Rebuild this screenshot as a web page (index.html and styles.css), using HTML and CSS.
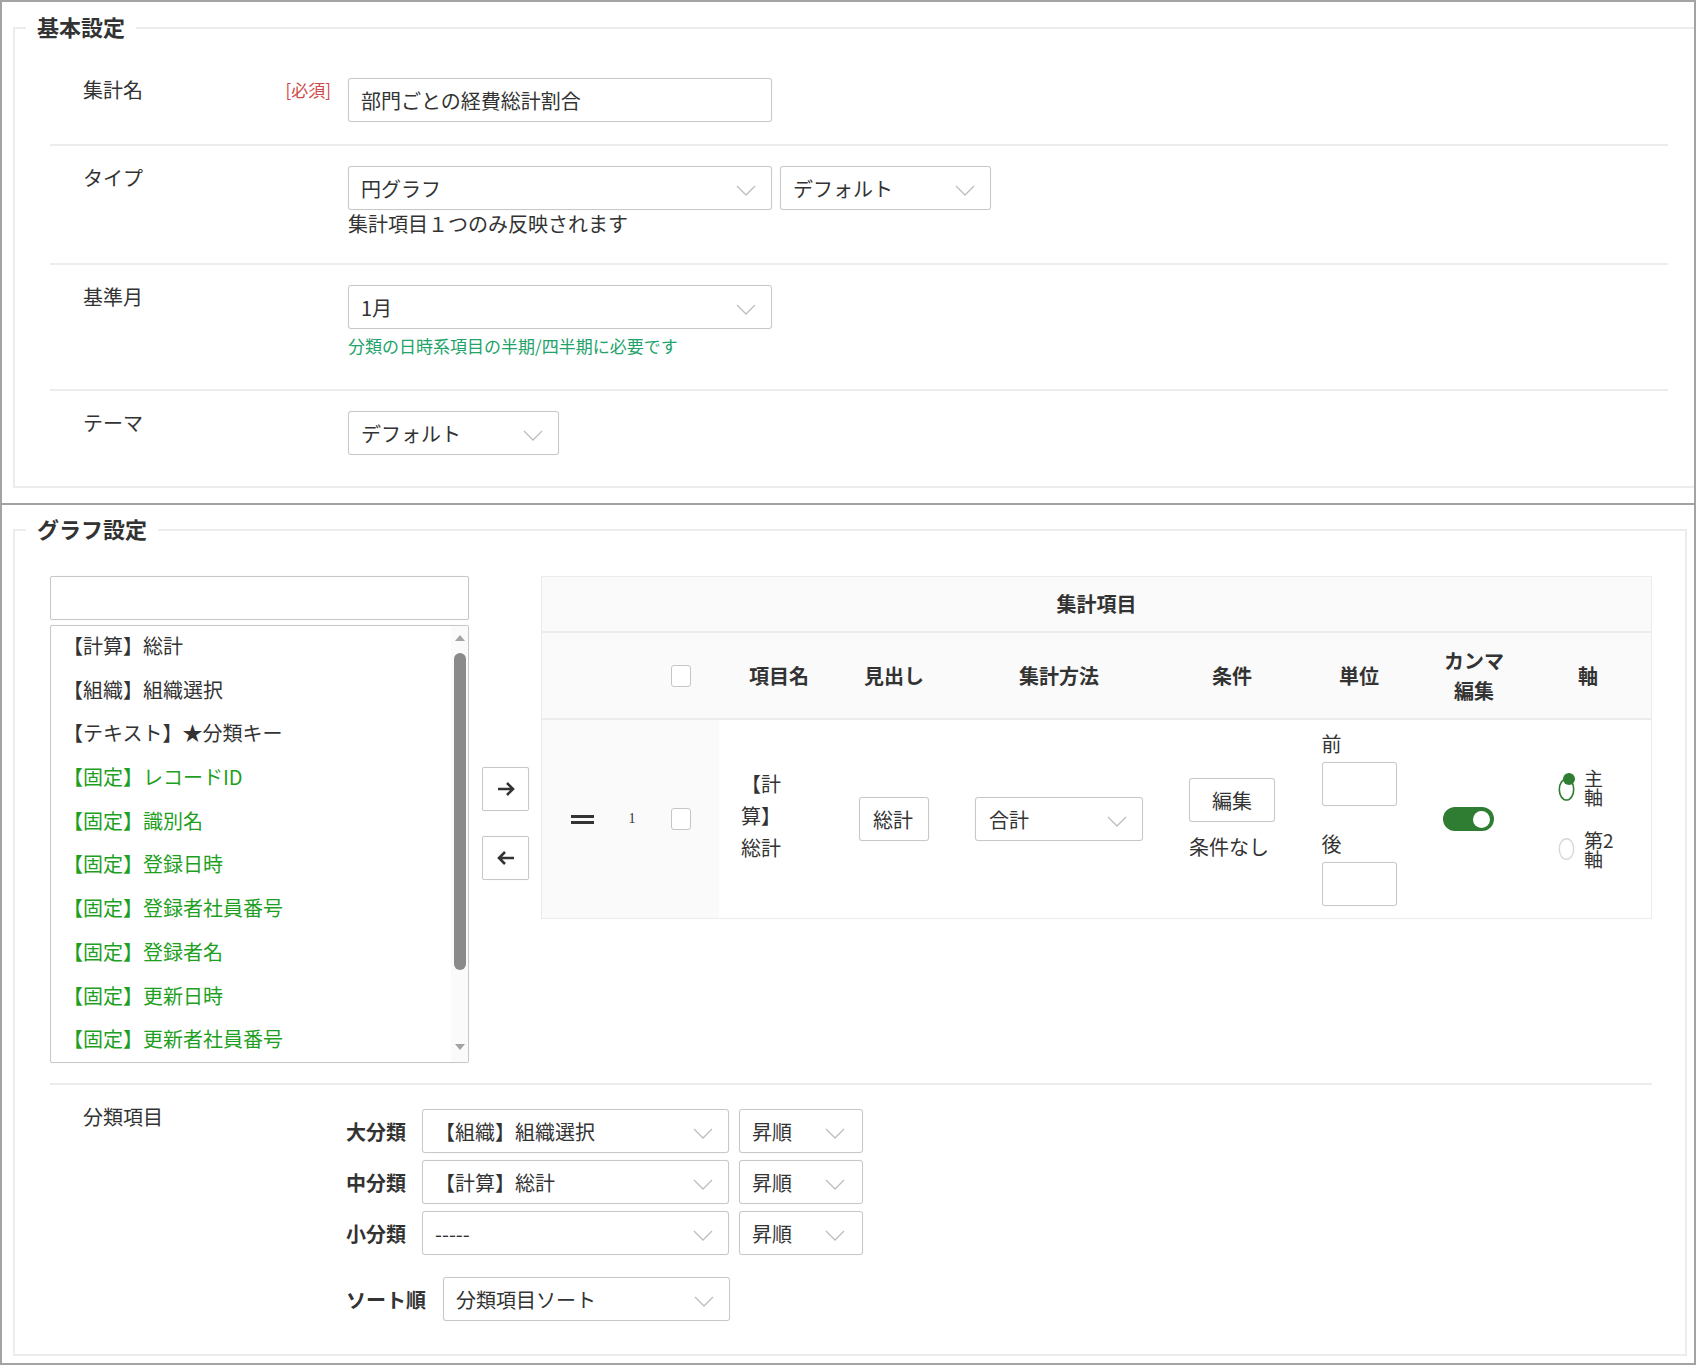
FILE: index.html
```html
<!DOCTYPE html>
<html lang="ja">
<head>
  <meta charset="UTF-8" />
  <meta name="viewport" content="width=device-width, initial-scale=1.0"/>
  <title>集計設定</title>
  <link rel="stylesheet" href="styles.css">
</head>
<body>
<div class="frame">

  <!-- 基本設定 -->
  <div class="panel panel-top">
    <fieldset class="box box-basic">
      <legend>基本設定</legend>
      <div class="box-body">
        <div class="row">
          <div class="row-label">集計名<span class="required">[必須]</span></div>
          <div class="row-field">
            <input type="text" class="field w-name" value="部門ごとの経費総計割合" />
          </div>
        </div>

        <div class="row">
          <div class="row-label">タイプ</div>
          <div class="row-field">
            <div class="field-group">
              <div class="field select w-name"><span>円グラフ</span><svg class="chev" width="20" height="11" viewBox="0 0 20 11"><polyline points="1,1 10,10 19,1"/></svg></div>
              <div class="field select w-short"><span>デフォルト</span><svg class="chev" width="20" height="11" viewBox="0 0 20 11"><polyline points="1,1 10,10 19,1"/></svg></div>
            </div>
            <p class="hint">集計項目１つのみ反映されます</p>
          </div>
        </div>

        <div class="row">
          <div class="row-label">基準月</div>
          <div class="row-field">
            <div class="field select w-name"><span>1月</span><svg class="chev" width="20" height="11" viewBox="0 0 20 11"><polyline points="1,1 10,10 19,1"/></svg></div>
            <p class="hint hint-green">分類の日時系項目の半期/四半期に必要です</p>
          </div>
        </div>

        <div class="row">
          <div class="row-label">テーマ</div>
          <div class="row-field">
            <div class="field select w-short"><span>デフォルト</span><svg class="chev" width="20" height="11" viewBox="0 0 20 11"><polyline points="1,1 10,10 19,1"/></svg></div>
          </div>
        </div>
      </div>
    </fieldset>
  </div>

  <!-- グラフ設定 -->
  <div class="panel panel-bottom">
    <fieldset class="box box-graph">
      <legend>グラフ設定</legend>
      <div class="box-body graph-body">
        <div class="graph">
          <div class="picker">
            <input type="text" class="field search" value="" />
            <div class="listbox">
              <ul class="list">
                <li>【計算】総計</li>
                <li>【組織】組織選択</li>
                <li>【テキスト】★分類キー</li>
                <li class="fixed">【固定】レコードID</li>
                <li class="fixed">【固定】識別名</li>
                <li class="fixed">【固定】登録日時</li>
                <li class="fixed">【固定】登録者社員番号</li>
                <li class="fixed">【固定】登録者名</li>
                <li class="fixed">【固定】更新日時</li>
                <li class="fixed">【固定】更新者社員番号</li>
              </ul>
              <div class="scroll">
                <span class="scroll-up"></span>
                <span class="scroll-thumb"></span>
                <span class="scroll-down"></span>
              </div>
            </div>
          </div>

          <div class="movers">
            <button class="mover" type="button">
              <svg width="20" height="16" viewBox="0 0 20 16"><path d="M2 8 H17 M11 2 L17 8 L11 14"/></svg>
            </button>
            <button class="mover" type="button">
              <svg width="20" height="16" viewBox="0 0 20 16"><path d="M18 8 H3 M9 2 L3 8 L9 14"/></svg>
            </button>
          </div>

          <div class="tbl">
            <div class="tbl-title">集計項目</div>
            <div class="tbl-grid tbl-head">
              <div></div>
              <div></div>
              <div class="cell"><span class="check"></span></div>
              <div>項目名</div>
              <div>見出し</div>
              <div>集計方法</div>
              <div>条件</div>
              <div>単位</div>
              <div>カンマ<br>編集</div>
              <div>軸</div>
            </div>
            <div class="tbl-grid tbl-body">
              <div class="cell cell-gray"><span class="handle"></span></div>
              <div class="cell cell-gray"><span class="num">1</span></div>
              <div class="cell cell-gray"><span class="check"></span></div>
              <div class="cell cell-left"><span class="item-name">【計算】総計</span></div>
              <div class="cell"><input type="text" class="field w-head" value="総計" /></div>
              <div class="cell">
                <div class="field select w-method"><span>合計</span><svg class="chev" width="20" height="11" viewBox="0 0 20 11"><polyline points="1,1 10,10 19,1"/></svg></div>
              </div>
              <div class="cell cell-left cond">
                <div>
                  <button class="field btn-edit" type="button">編集</button>
                  <p class="cond-text">条件なし</p>
                </div>
              </div>
              <div class="cell">
                <div class="unit">
                  <p>前</p>
                  <input type="text" class="field w-unit" value="" />
                  <p class="unit-after">後</p>
                  <input type="text" class="field w-unit" value="" />
                </div>
              </div>
              <div class="cell"><span class="toggle"><span class="knob"></span></span></div>
              <div class="cell cell-left axis">
                <div class="axis-list">
                  <label class="axis-opt">
                    <svg width="18" height="30" viewBox="0 0 18 30"><ellipse cx="8.5" cy="17.5" rx="7.2" ry="10.5" fill="none" stroke="#2e7d32" stroke-width="1.6"/><circle cx="11" cy="7" r="6" fill="#2e7d32"/></svg>
                    <span>主軸</span>
                  </label>
                  <label class="axis-opt">
                    <svg width="18" height="24" viewBox="0 0 18 24"><ellipse cx="8.5" cy="12" rx="7.2" ry="10.3" fill="none" stroke="#d8d8d8" stroke-width="1.4"/></svg>
                    <span>第2軸</span>
                  </label>
                </div>
              </div>
            </div>
          </div>
        </div>

        <div class="cls">
          <div class="cls-label">分類項目</div>
          <div class="cls-body">
            <div class="cls-row">
              <b>大分類</b>
              <div class="field select w-cls"><span>【組織】組織選択</span><svg class="chev" width="20" height="11" viewBox="0 0 20 11"><polyline points="1,1 10,10 19,1"/></svg></div>
              <div class="field select w-order"><span>昇順</span><svg class="chev" width="20" height="11" viewBox="0 0 20 11"><polyline points="1,1 10,10 19,1"/></svg></div>
            </div>
            <div class="cls-row">
              <b>中分類</b>
              <div class="field select w-cls"><span>【計算】総計</span><svg class="chev" width="20" height="11" viewBox="0 0 20 11"><polyline points="1,1 10,10 19,1"/></svg></div>
              <div class="field select w-order"><span>昇順</span><svg class="chev" width="20" height="11" viewBox="0 0 20 11"><polyline points="1,1 10,10 19,1"/></svg></div>
            </div>
            <div class="cls-row">
              <b>小分類</b>
              <div class="field select w-cls"><span>-----</span><svg class="chev" width="20" height="11" viewBox="0 0 20 11"><polyline points="1,1 10,10 19,1"/></svg></div>
              <div class="field select w-order"><span>昇順</span><svg class="chev" width="20" height="11" viewBox="0 0 20 11"><polyline points="1,1 10,10 19,1"/></svg></div>
            </div>
            <div class="cls-row sort-row">
              <b>ソート順</b>
              <div class="field select w-sort"><span>分類項目ソート</span><svg class="chev" width="20" height="11" viewBox="0 0 20 11"><polyline points="1,1 10,10 19,1"/></svg></div>
            </div>
          </div>
        </div>
      </div>
    </fieldset>
  </div>

</div>
</body>
</html>
```

FILE: styles.css
```css
:root {
  --text: #333;
  --frame: #a3a3a3;
  --line: #ececec;
  --input-border: #c8c8c8;
  --green: #2e7d32;
  --list-green: #1f9f1f;
  --hint-green: #22a36a;
  --gray-bg: #fafafa;
}

* {
  box-sizing: border-box;
  margin: 0;
  padding: 0;
}

body {
  font-family: "Noto Sans CJK JP", "Noto Sans", sans-serif;
  font-size: 20px;
  color: var(--text);
  background: #fff;
}

.frame {
  width: 1696px;
  height: 1365px;
  border: 2px solid var(--frame);
  overflow: hidden;
  background: #fff;
}

.panel {
  overflow: hidden;
}

.panel-top {
  height: 503px;
  border-bottom: 2px solid var(--frame);
}

.panel-bottom {
  height: 856px;
}

/* fieldsets */
.box {
  border: 2px solid var(--line);
  padding: 0 0 0 11px;
  min-width: 0;
}

.box legend {
  padding: 0 11px 4px;
  font-size: 22px;
  font-weight: bold;
  line-height: 26px;
  color: var(--text);
}

.box-basic {
  margin: 11px 0 0 11px;
  width: 1690px;
}

.box-graph {
  margin: 10px 0 0 11px;
  width: 1674px;
}

.box-body {
  padding: 15px 33px 9px 24px;
}

.graph-body {
  padding: 31px 33px 33px 24px;
}

/* form rows */
.row {
  display: flex;
  padding: 20px 0 22px;
  border-bottom: 2px solid var(--line);
}

.row:last-child {
  border-bottom: none;
}

.row-label {
  width: 298px;
  flex: none;
  padding: 0 17px 0 33px;
  line-height: 24px;
  display: flex;
  justify-content: space-between;
}

.required {
  color: #cf4a4a;
  font-size: 17px;
}

.field {
  height: 44px;
  border: 1px solid var(--input-border);
  border-radius: 3px;
  background: #fff;
  font-family: inherit;
  font-size: 20px;
  color: var(--text);
  padding: 0 12px;
  box-shadow: 0 0 1px rgba(0, 0, 0, 0.12);
}

input.field {
  outline: none;
}

.select {
  display: flex;
  align-items: center;
  justify-content: space-between;
  padding: 0 15px 0 12px;
  white-space: nowrap;
}

.chev {
  flex: none;
  margin-top: 5px;
}

.chev polyline {
  fill: none;
  stroke: #bdbdbd;
  stroke-width: 1.3;
}

.field-group {
  display: flex;
  gap: 8px;
}

.w-name { width: 424px; }
.w-short { width: 211px; }
.w-head { width: 70px; padding: 0 13px; }
.w-method { width: 168px; padding-left: 13px; }
.w-unit { width: 75px; }
.w-cls { width: 307px; }
.w-order { width: 124px; padding-right: 17px; }
.w-sort { width: 287px; }

.hint {
  line-height: 22px;
  margin: 3px 0 6px;
}

.hint-green {
  font-size: 17px;
  line-height: 20px;
  color: var(--hint-green);
  margin: 7px 0 11px;
}

/* graph area */
.graph {
  display: flex;
  align-items: flex-start;
}

.picker {
  width: 419px;
  flex: none;
}

.search {
  display: block;
  width: 100%;
  height: 44px;
  border-radius: 2px;
}

.listbox {
  margin-top: 5px;
  height: 438px;
  border: 1px solid var(--input-border);
  border-radius: 2px;
  display: flex;
  box-shadow: 0 0 1px rgba(0, 0, 0, 0.12);
}

.list {
  flex: 1;
  list-style: none;
  padding-left: 12px;
  overflow: hidden;
}

.list li {
  height: 43.7px;
  line-height: 40px;
  white-space: nowrap;
}

.list li.fixed {
  color: var(--list-green);
}

.scroll {
  width: 17px;
  flex: none;
  display: flex;
  flex-direction: column;
  align-items: center;
  background: var(--gray-bg);
}

.scroll-up,
.scroll-down {
  width: 0;
  height: 0;
  border-left: 5px solid transparent;
  border-right: 5px solid transparent;
}

.scroll-up {
  margin-top: 9px;
  border-bottom: 6px solid #a3a3a3;
}

.scroll-thumb {
  margin-top: 12px;
  width: 12px;
  height: 317px;
  border-radius: 6px;
  background: #8a8a8a;
}

.scroll-down {
  margin-top: auto;
  margin-bottom: 12px;
  border-top: 6px solid #a3a3a3;
}

.movers {
  width: 47px;
  flex: none;
  height: 487px;
  padding-top: 8px;
  margin: 0 12px 0 13px;
  display: flex;
  flex-direction: column;
  justify-content: center;
  gap: 25px;
}

.mover {
  height: 44px;
  border: 1px solid var(--input-border);
  border-radius: 2px;
  background: #fff;
  display: flex;
  align-items: center;
  justify-content: center;
  box-shadow: 0 0 1px rgba(0, 0, 0, 0.12);
}

.mover path {
  fill: none;
  stroke: #333;
  stroke-width: 2.6;
}

/* aggregation table */
.tbl {
  flex: 1;
  border: 1px solid var(--line);
  background: var(--gray-bg);
}

.tbl-title {
  height: 56px;
  line-height: 54px;
  text-align: center;
  font-weight: bold;
  border-bottom: 2px solid var(--line);
}

.tbl-grid {
  display: grid;
  grid-template-columns: 80px 20px 77px 120px 110px 220px 126px 128px 102px 126px;
}

.tbl-head {
  height: 87px;
  align-items: center;
  text-align: center;
  font-weight: bold;
  line-height: 30px;
  border-bottom: 2px solid var(--line);
}

.tbl-body {
  height: 198px;
  background: #fff;
}

.cell {
  display: flex;
  align-items: center;
  justify-content: center;
}

.cell-gray {
  background: var(--gray-bg);
}

.cell-left {
  justify-content: flex-start;
}

.check {
  display: block;
  width: 20px;
  height: 22px;
  border: 1px solid #c6c6c6;
  border-radius: 3px;
  background: #fff;
}

.handle {
  display: block;
  width: 23px;
  height: 9px;
  border-top: 3px solid #333;
  border-bottom: 3px solid #333;
}

.num {
  font-family: "Liberation Serif", serif;
  font-size: 14px;
}

.item-name {
  display: block;
  width: 50px;
  margin-left: 22px;
  line-height: 32px;
  margin-top: -6px;
}

.cond {
  padding-left: 20px;
}

.btn-edit {
  display: block;
  width: 86px;
  text-align: center;
  cursor: pointer;
}

.cond-text {
  margin-top: 12px;
  line-height: 26px;
}

.unit p {
  line-height: 24px;
}

.unit .field {
  display: block;
  margin-top: 6px;
}

.unit .unit-after {
  margin-top: 26px;
}

.toggle {
  width: 51px;
  height: 24px;
  margin-right: 12px;
  border-radius: 12px;
  background: var(--green);
  display: flex;
  align-items: center;
  justify-content: flex-end;
  padding: 0 4px;
}

.knob {
  width: 17px;
  height: 17px;
  border-radius: 50%;
  background: #fff;
}

.axis {
  padding-left: 33px;
}

.axis-list {
  display: flex;
  flex-direction: column;
  gap: 24px;
  margin-top: -2px;
}

.axis-opt {
  display: flex;
  align-items: center;
  gap: 8px;
}

.axis-opt span {
  width: 32px;
  font-size: 19px;
  line-height: 19px;
}

/* classification */
.cls {
  display: flex;
  margin-top: 20px;
  padding-top: 24px;
  border-top: 2px solid var(--line);
}

.cls-label {
  width: 296px;
  flex: none;
  padding-left: 33px;
  margin-top: -4px;
  line-height: 24px;
}

.cls-body {
  display: flex;
  flex-direction: column;
  gap: 7px;
}

.cls-row {
  display: flex;
  align-items: center;
}

.cls-row b {
  width: 76px;
  flex: none;
  font-weight: bold;
}

.cls-row .w-order {
  margin-left: 10px;
}

.sort-row {
  margin-top: 15px;
}

.sort-row b {
  width: auto;
  margin-right: 17px;
}
```
